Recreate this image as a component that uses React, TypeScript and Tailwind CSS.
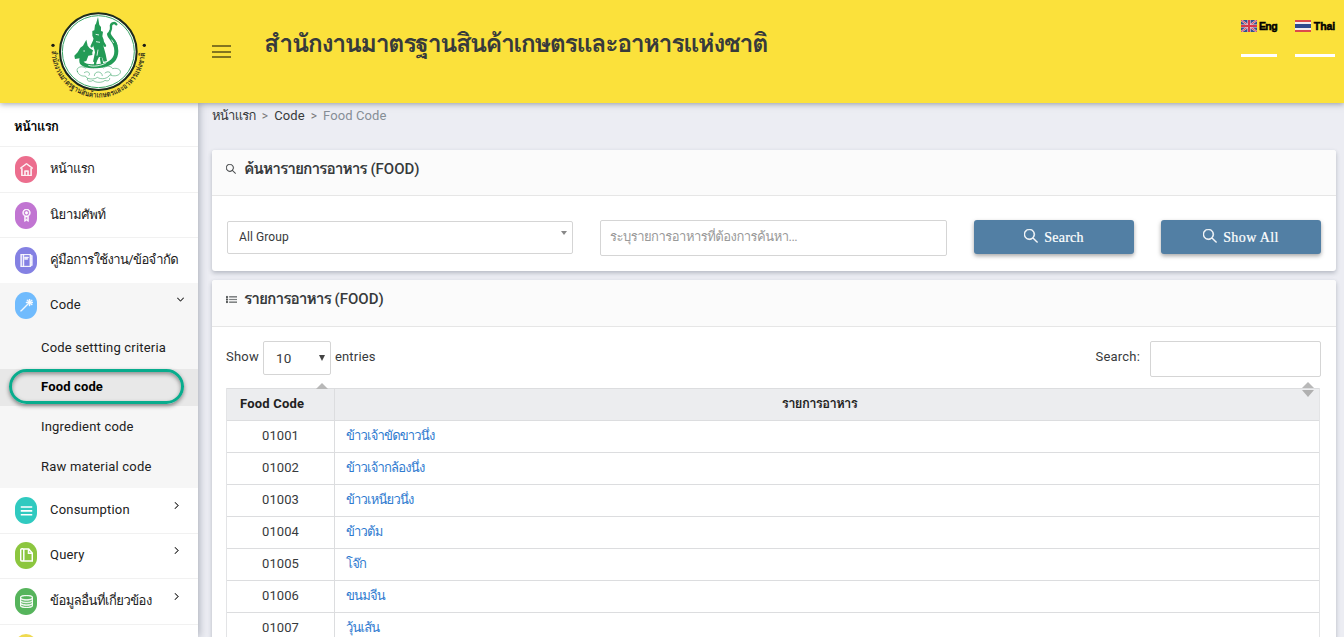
import React from "react";
import type { ReactNode } from "react";
import { TfiHome, TfiMedallAlt, TfiAgenda, TfiWand, TfiMenu, TfiServer, TfiSearch, TfiAngleRight, TfiAngleDown, TfiList } from "react-icons/tfi";

const foods: [string, string][] = [
  ["01001", "ข้าวเจ้าขัดขาวนึ่ง"],
  ["01002", "ข้าวเจ้ากล้องนึ่ง"],
  ["01003", "ข้าวเหนียวนึ่ง"],
  ["01004", "ข้าวต้ม"],
  ["01005", "โจ๊ก"],
  ["01006", "ขนมจีน"],
  ["01007", "วุ้นเส้น"],
];

function Logo() {
  return (
    <svg width="106" height="98" viewBox="0 0 318 294" className="mt-[5px] ml-[45px] shrink-0">
      <circle cx="160" cy="140" r="115" fill="#fff" stroke="#1c2b1c" strokeWidth="6" />
      <circle cx="160" cy="140" r="108" fill="none" stroke="#3aa564" strokeWidth="3" />
      <g fill="none" stroke="#239b56" strokeLinecap="round" strokeLinejoin="round">
        <path d="M214 58c-6-8-18-2-16 8 2 12 -6 14 -6 22 2 10 20 16 22 34" strokeWidth="7" />
        <path d="M192 88c2 12 22 20 22 50 0 26-18 40-46 44-24 4-52 2-58-10" strokeWidth="12" />
        <path d="M110 172c-4-8 0-18 10-20" strokeWidth="12" />
        <path d="M97 199c-6-12 14-18 24-10 8-8 20-6 24 0 8-8 24-6 30 0 10-8 24-6 28 2 14-4 28 4 22 14-4 8-22 10-30 4-6 12-26 16-38 8-10 8-32 6-36-4-10 2-22-4-24-14zM118 203c10-8 20 2 14 8M148 212c0-16 24-14 24 0M180 204c8-8 20-2 18 6M128 220c-6 8 8 12 16 6 8 8 28 8 36 0 8 4 16 0 14-6" strokeWidth="2" opacity="0.8" />
        <path d="M150 102l-10 22M168 102l12 20M152 160l-2 20M168 160l4 20" strokeWidth="7" />
      </g>
      <g fill="#239b56">
        <path d="M159 36l4 24 5 6 0 12 6 2-2 14 4 10 0 22 6 22 4 20-10 2-4-12-10-2-8 16-10-2 6-28-6-22 2-18-4-10 0-14 6-2 2-16 3-4z" />
        <path d="M124 104l4 18 6 8 10 6-2 14-12 2-6 16-14 4-6-12-14 2-2-10 10-10 8-14 8-6z" />
      </g>
      <path d="M142 146l5-12M156 152l3-18M152 88l10 2M153 110l12 2M120 138l-5 0M130 181c14 5 38 2 54-8M200 104l6 10" fill="none" stroke="#fff" strokeWidth="2.5" />
      <path id="ring" d="M20 138a140 140 0 0 0 280 0" fill="none" />
      <circle cx="24" cy="121" r="5" fill="#1b1b16" />
      <circle cx="298" cy="121" r="5" fill="#1b1b16" />
      <text fontSize="24" fontWeight="700" fill="#33301a" className="font-[Loma,sans-serif]" textLength="434" lengthAdjust="spacingAndGlyphs">
        <textPath href="#ring">สำนักงานมาตรฐานสินค้าเกษตรและอาหารแห่งชาติ</textPath>
      </text>
    </svg>
  );
}

function UkFlag() {
  return (
    <svg width="16" height="12" viewBox="0 0 16 12" className="shrink-0">
      <path fill="#35508f" d="M0 0h16v12H0z" />
      <path d="M0 0l16 12M16 0L0 12" stroke="#e6c9d2" strokeWidth="2" />
      <path d="M0 0l16 12M16 0L0 12" stroke="#d9455a" strokeWidth="1" />
      <path d="M8 0v12M0 6h16" stroke="#f0d3d6" strokeWidth="3.2" />
      <path d="M8 0v12M0 6h16" stroke="#d5384c" strokeWidth="2" />
    </svg>
  );
}

function ThaiFlag() {
  return (
    <svg width="16" height="12" viewBox="0 0 16 12" className="shrink-0">
      <path fill="#dc4a4c" d="M0 0h16v12H0z" />
      <path fill="#f3eef0" d="M0 2h16v8H0z" />
      <path fill="#2f4a8e" d="M0 4h16v4H0z" />
    </svg>
  );
}

function PagesIcon() {
  return (
    <svg width="13" height="14" viewBox="0 0 13 14" fill="none" stroke="currentColor" className="[stroke-width:1.5]!">
      <path d="M3.8 11.5V2C3.8.3.7.3.7 2v9.500c0 .9.7 1.600 1.600 1.600h10V5L8.700.9H2.600M8.500 1v4.300h3.800M3.800 11.500c0 .9-.7 1.600-1.500 1.600" />
    </svg>
  );
}

type RowProps = { icon: ReactNode; color: string; label: string; labelClass: string; arrow?: ReactNode; className: string };

function MenuRow({ icon, color, label, labelClass, arrow, className }: RowProps) {
  return (
    <div className={"flex shrink-0 items-start pl-[15px] pt-[9px] " + className}>
      <span className={"flex h-[27px] w-[22px] shrink-0 items-center justify-center rounded-full pb-px text-[13px] text-white [&_svg]:stroke-current [&_svg]:[stroke-width:0.8] " + color}>{icon}</span>
      <span className={"ml-[13px] grow whitespace-nowrap leading-5 " + labelClass}>{label}</span>
      <span className="mr-[18px] mt-[5px] text-[7px] text-[#222] [&_svg]:stroke-current [&_svg]:[stroke-width:1.5]">{arrow}</span>
    </div>
  );
}

const latin = "mt-[3px] text-[13px] tracking-[0.2px]";
const thai = "mt-[3px] text-[13px] tracking-[-0.6px]";

function Sidebar() {
  return (
    <nav className="relative z-10 flex w-[198px] shrink-0 flex-col overflow-hidden bg-white text-[#212121] shadow-[1px_0_8px_rgba(60,70,90,0.4)]">
      <div className="h-[44px] shrink-0 border-b border-[#f1f1f1] pl-[14px] pt-[14px] text-[13px] font-bold leading-5 tracking-[-0.6px] text-black">หน้าแรก</div>
      <MenuRow className="h-[46px] border-b border-[#f1f1f1]" icon={<TfiHome />} color="bg-[#ec6e8e]" label="หน้าแรก" labelClass={thai} />
      <MenuRow className="h-[45px] border-b border-[#f1f1f1]" icon={<TfiMedallAlt />} color="bg-[#c175d2]" label="นิยามศัพท์" labelClass="mt-[3px] text-[13px] tracking-[-0.3px]" />
      <MenuRow className="h-[45px]" icon={<TfiAgenda />} color="bg-[#8481e3]" label="คู่มือการใช้งาน/ข้อจำกัด" labelClass={thai} />
      <div className="relative h-[205px] shrink-0 bg-[#f6f6f6]">
        <MenuRow className="h-[45px]" icon={<TfiWand />} color="bg-[#70bbfd]" label="Code" labelClass={latin} arrow={<TfiAngleDown className="mr-[-4px] mt-[-1px]" />} />
        <div className="text-[13px] tracking-[0.2px]">
          <div className="h-[41px] pl-[41px] pt-[10px] leading-5">Code settting criteria</div>
          <div className="h-[37px] bg-[#e8e8e8] pl-[41px] pt-[8px] font-bold leading-5 tracking-[0.15px] text-black">Food code</div>
          <div className="h-[40px] pl-[41px] pt-[11px] leading-5">Ingredient code</div>
          <div className="h-[40px] pl-[41px] pt-[11px] leading-5">Raw material code</div>
        </div>
        <div className="absolute left-[9px] top-[86px] h-[35px] w-[175px] rounded-full border-3 border-[#08ac8d] shadow-[0_2px_4px_rgba(0,0,0,0.45),inset_0_2px_4px_rgba(0,0,0,0.4)]" />
      </div>
      <MenuRow className="h-[46px] border-b border-[#f1f1f1]" icon={<TfiMenu className="[stroke-width:0]!" />} color="bg-[#30cac0]" label="Consumption" labelClass={latin} arrow={<TfiAngleRight />} />
      <MenuRow className="-mt-px h-[46px] border-b border-[#f1f1f1]" icon={<PagesIcon />} color="bg-[#8cc63f]" label="Query" labelClass={latin} arrow={<TfiAngleRight />} />
      <MenuRow className="h-[46px] border-b border-[#f1f1f1]" icon={<TfiServer />} color="bg-[#56b45c]" label="ข้อมูลอื่นที่เกี่ยวข้อง" labelClass="mt-[3px] text-[13px] tracking-[-0.5px]" arrow={<TfiAngleRight />} />
      <MenuRow className="h-[45px]" icon={null} color="bg-[#efda50]" label="" labelClass={thai} />
    </nav>
  );
}

const card = "rounded-[3px] bg-white shadow-[0_2px_4px_rgba(50,60,80,0.3)]";
const button = "flex h-[34px] w-[160px] items-center justify-center rounded-[3px] bg-[#527fa4] font-['Liberation_Serif',serif] text-[14px] text-white shadow-[0_2px_4px_rgba(0,0,0,0.35)] [-webkit-text-stroke:0.2px_white] [&_svg]:stroke-current [&_svg]:[stroke-width:0.7]";
const title = "whitespace-nowrap text-[15px] font-medium leading-5";
const titleThai = "text-[15.5px] font-bold tracking-[-1px]";

export default function App() {
  return (
    <div className="flex h-[637px] w-[1344px] flex-col overflow-hidden bg-[#ecedf3] font-[Roboto,Loma,sans-serif] text-[#373a3c]">
      <header className="relative z-20 flex h-[103px] shrink-0 bg-[#fbe13b] shadow-[0_1px_6px_rgba(60,70,90,0.5)]">
        <Logo />
        <div className="ml-[61px] mt-[45px] flex h-[13px] w-[19px] flex-col justify-between">
          <i className="h-[2px] bg-[#83751f]" />
          <i className="h-[2px] bg-[#83751f]" />
          <i className="h-[2px] bg-[#83751f]" />
        </div>
        <h1 className="ml-[33px] mt-[26px] whitespace-nowrap text-[25px] font-bold leading-[36px] tracking-[-1.38px]">สำนักงานมาตรฐานสินค้าเกษตรและอาหารแห่งชาติ</h1>
        <div className="ml-auto mr-[9px] mt-[20px] flex gap-[18px] font-['Liberation_Sans',sans-serif] text-[10.5px] font-bold leading-[13px] text-black [-webkit-text-stroke:0.5px_black]">
          <div className="flex h-[37px] w-[36px] justify-between border-b-3 border-white tracking-[-0.6px]"><UkFlag /><span>Eng</span></div>
          <div className="flex h-[37px] w-[40px] justify-between border-b-3 border-white tracking-[-0.1px]"><ThaiFlag /><span>Thai</span></div>
        </div>
      </header>
      <div className="flex min-h-0 grow">
        <Sidebar />
        <main className="min-w-0 grow pl-[14px] pr-[8px]">
          <div className="flex h-[47px] items-start gap-[6px] pt-[3px] text-[13px] leading-5 tracking-[0.1px]">
            <span className="tracking-[-0.7px]">หน้าแรก</span>
            <span className="text-[12px] text-[#777]">&gt;</span>
            <span>Code</span>
            <span className="text-[12px] text-[#777]">&gt;</span>
            <span className="text-[#868e96]">Food Code</span>
          </div>
          <section className={"h-[121px] " + card}>
            <div className="flex h-[46px] items-start rounded-t-[3px] border-b border-[#e6e6e6] bg-[#fbfbfb] pl-[14px] pt-[9px]">
              <TfiSearch className="mt-[5px] stroke-current text-[10px] [stroke-width:0.6]" />
              <h2 className={"ml-[8px] " + title}><span className={titleThai}>ค้นหารายการอาหาร</span> (FOOD)</h2>
            </div>
            <div className="flex items-start pl-[15px] pt-[24px]">
              <div className="mt-[1px] flex h-[33px] w-[346px] justify-between rounded-[2px] border border-[#d5d5d5] pl-[11px] pr-[5px] text-[12px] leading-[31px] tracking-[0.1px]">
                <span>All Group</span>
                <i className="mt-[9px] h-0 w-0 border-x-[3.500px] border-t-4 border-x-transparent border-t-[#888]" />
              </div>
              <div className="ml-[27px] h-[36px] w-[347px] whitespace-nowrap rounded-[2px] border border-[#d5d5d5] pl-[9px] text-[13px] leading-[32px] tracking-[-0.5px] text-[#999]">ระบุรายการอาหารที่ต้องการค้นหา...</div>
              <div className={"ml-[27px] " + button}><TfiSearch className="mr-[6px] mt-[-2px]" /><span className="tracking-[0.200px]">Search</span></div>
              <div className={"ml-[27px] " + button}><TfiSearch className="mr-[6px] mt-[-2px]" /><span className="tracking-[0.400px]">Show All</span></div>
            </div>
          </section>
          <section className={"mt-[9px] h-[400px] " + card}>
            <div className="flex h-[47px] items-start rounded-t-[3px] border-b border-[#e6e6e6] bg-[#fbfbfb] pl-[14px] pt-[9px]">
              <TfiList className="mt-[5px] stroke-current text-[11px] [stroke-width:0.3]" />
              <h2 className={"ml-[7px] " + title}><span className={titleThai}>รายการอาหาร</span> (FOOD)</h2>
            </div>
            <div className="flex h-[61px] items-start pl-[14px] pr-[15px] pt-[14px] text-[13px] leading-[31px] tracking-[0.200px]">
              <span>Show</span>
              <div className="ml-[4px] flex h-[34px] w-[68px] items-center justify-between rounded-[2px] border border-[#d5d5d5] pl-[12px] pr-[5px] text-[13.5px]">
                <span>10</span>
                <i className="h-0 w-0 border-x-[3px] border-t-[6px] border-x-transparent border-t-[#444]" />
              </div>
              <span className="ml-[4px]">entries</span>
              <span className="ml-auto">Search:</span>
              <div className="ml-[10px] h-[36px] w-[171px] rounded-[2px] border border-[#d5d5d5]" />
            </div>
            <div className="mx-[14px] mr-[16px] border-x border-[#e3e4e6] text-[13px]">
              <div className="relative flex h-[33px] border-y border-[#dcdddf] bg-[#ecedef] font-bold leading-[30px] text-[#222]">
                <div className="w-[108px] border-r border-[#dcdddf] pl-[13px] tracking-[0.2px]">Food Code</div>
                <div className="grow pr-[15px] text-center tracking-[-0.600px]">รายการอาหาร</div>
                <i className="absolute left-[89px] top-[-6px] h-0 w-0 border-x-[6px] border-b-[6px] border-x-transparent border-b-[#b8b8b8]" />
                <i className="absolute right-[5px] top-[-7px] h-0 w-0 border-x-[6px] border-b-[6px] border-x-transparent border-b-[#b8b8b8]" />
                <i className="absolute right-[5px] top-[1px] h-0 w-0 border-x-[6px] border-t-[7px] border-x-transparent border-t-[#b0b0b0]" />
              </div>
              {foods.map(([code, name]) => (
                <div key={code} className="flex h-[32px] border-b border-[#dcdddf] leading-[30px]">
                  <div className="w-[108px] border-r border-[#dcdddf] text-center tracking-[0.100px]">{code}</div>
                  <div className="grow pl-[11px] tracking-[-0.800px] text-[#2f7bd0]">{name}</div>
                </div>
              ))}
            </div>
          </section>
        </main>
      </div>
    </div>
  );
}
